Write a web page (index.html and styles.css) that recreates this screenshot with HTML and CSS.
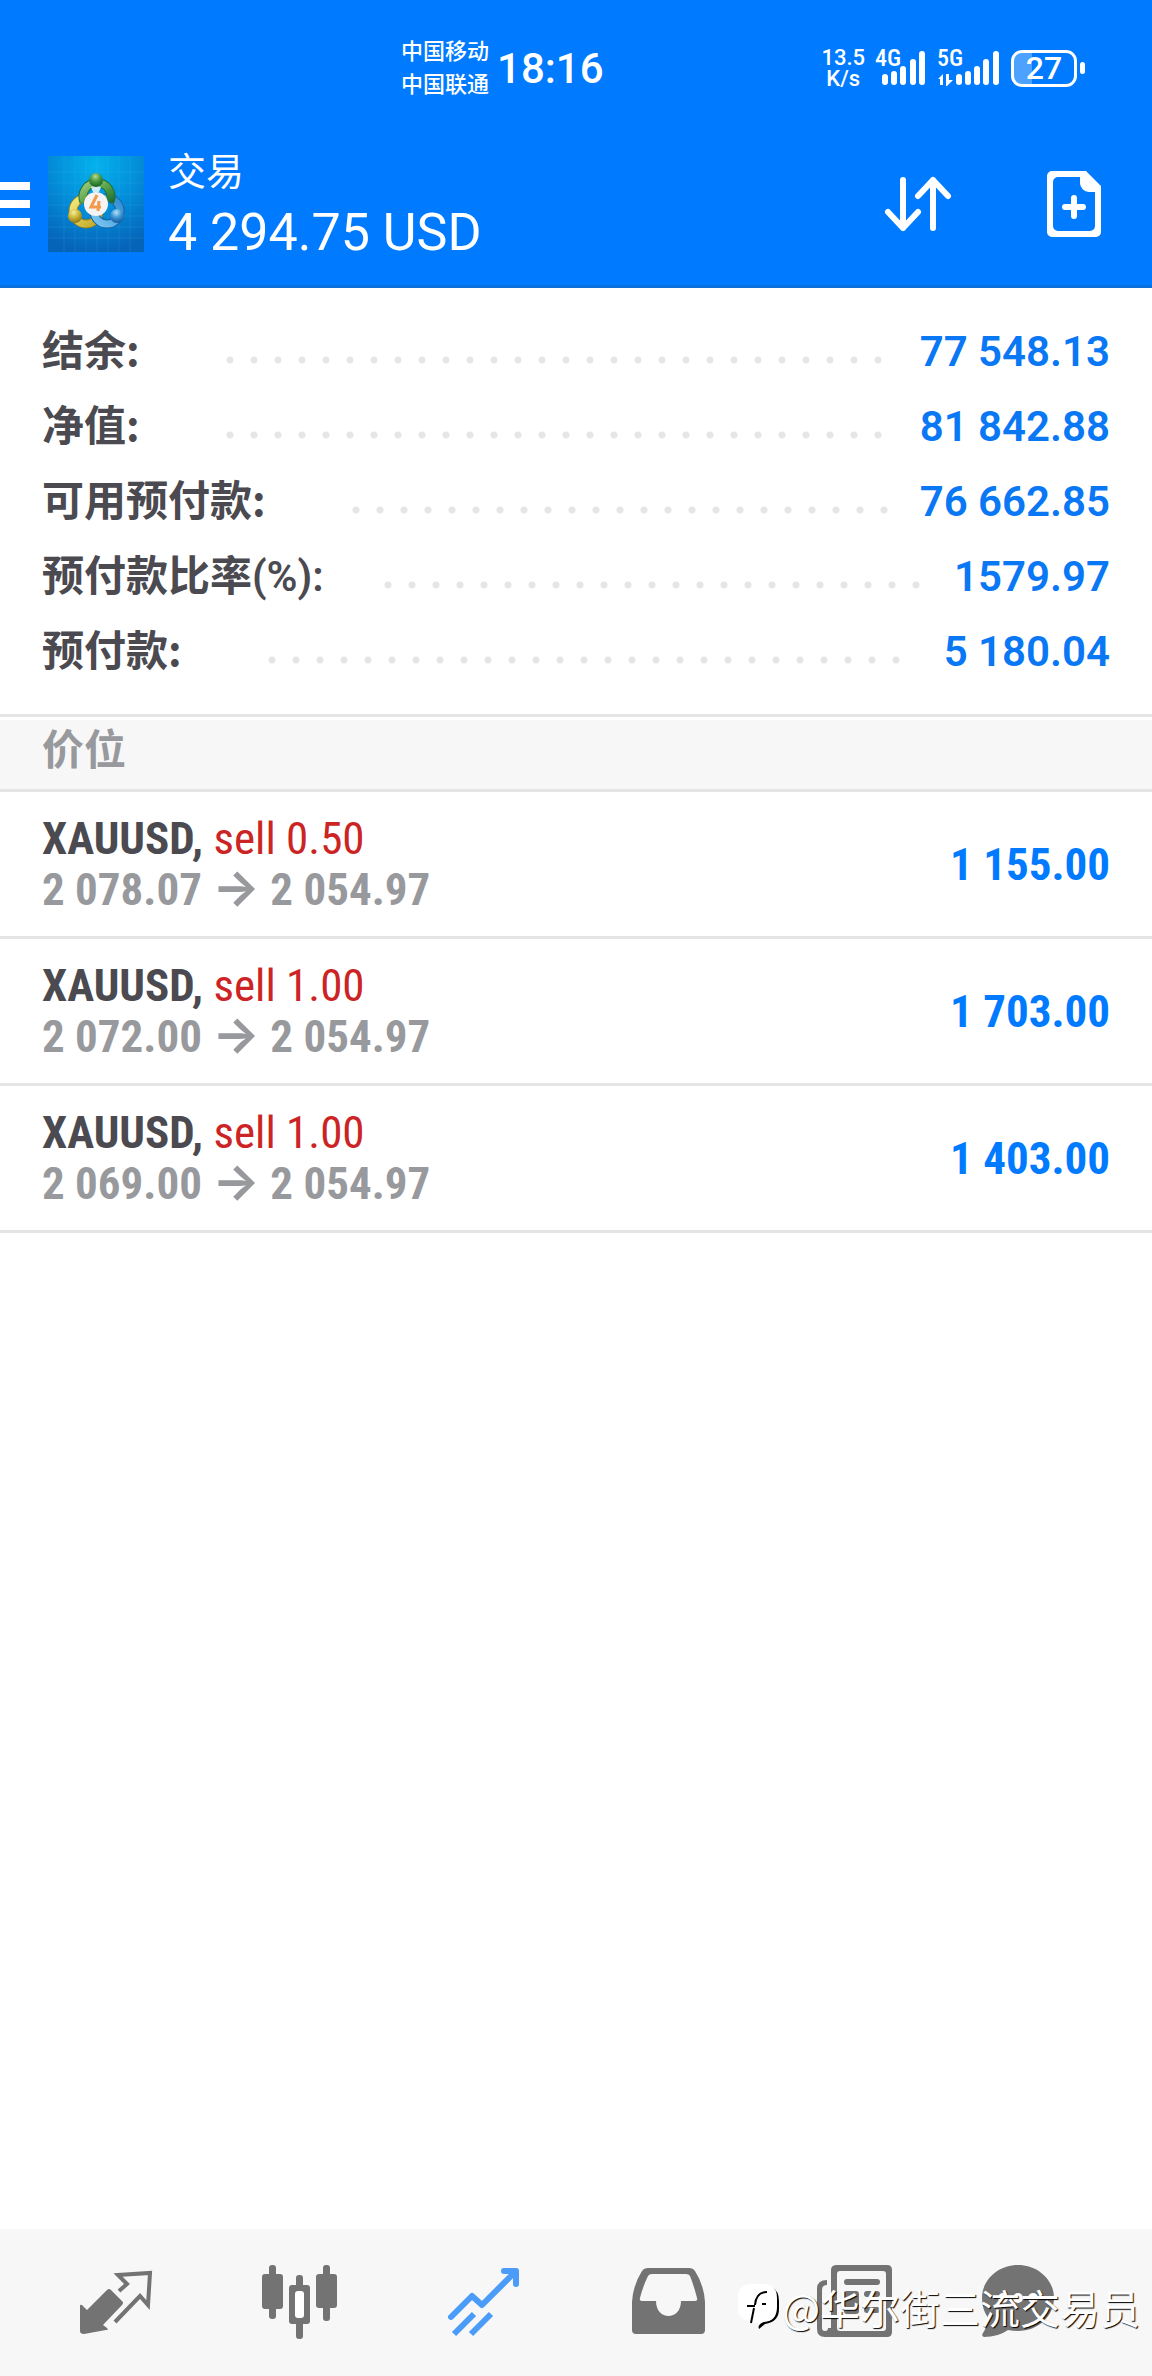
FILE: index.html
```html
<!DOCTYPE html>
<html lang="zh-CN">
<head>
<meta charset="utf-8">
<meta name="viewport" content="width=device-width, initial-scale=1">
<title>交易</title>
<link rel="stylesheet" href="styles.css">
</head>
<body>
<header class="top">
  <div class="status">
    <div class="carriers"><span>中国移动</span><span>中国联通</span></div>
    <time class="clock">18:16</time>
    <div class="status-right">
      <div class="speed"><span>13.5</span><span>K/s</span></div>
      <svg class="signal" width="52" height="52" viewBox="0 -8 52 52" fill="#fff" aria-hidden="true">
        <text x="0" y="16" class="net">4G</text>
        <rect x="7" y="24" width="6" height="11" rx="3"/><rect x="16" y="21" width="6" height="14" rx="3"/><rect x="25" y="16" width="6" height="19" rx="3"/><rect x="35" y="9" width="6" height="26" rx="3"/><rect x="44" y="1" width="6" height="34" rx="3"/>
      </svg>
      <svg class="signal" width="64" height="52" viewBox="0 -8 64 52" fill="#fff" aria-hidden="true">
        <text x="0" y="16" class="net">5G</text>
        <path d="M1 29l5-5v11h-3v-6zM9 24h3v6h4l-6 6h-1z"/>
        <rect x="19" y="24" width="6" height="11" rx="3"/><rect x="28" y="21" width="6" height="14" rx="3"/><rect x="37" y="16" width="6" height="19" rx="3"/><rect x="46" y="9" width="6" height="26" rx="3"/><rect x="56" y="1" width="6" height="34" rx="3"/>
      </svg>
      <div class="battery">27</div>
    </div>
  </div>
  <div class="bar">
    <button class="menu" type="button" aria-label="菜单"><i></i><i></i><i></i></button>
    <svg class="logo" viewBox="0 0 96 96" aria-hidden="true">
      <defs>
        <radialGradient id="sky" cx="50%" cy="10%" r="90%"><stop offset="0" stop-color="#04b2ec"/><stop offset=".5" stop-color="#038dd9"/><stop offset="1" stop-color="#0564b8"/></radialGradient>
        <linearGradient id="green" x1="0" y1="0" x2="1" y2="1"><stop offset="0" stop-color="#9ccb7c"/><stop offset=".6" stop-color="#4e9c43"/><stop offset="1" stop-color="#1f6f35"/></linearGradient>
        <linearGradient id="gold" x1="0" y1="0" x2="1" y2="1"><stop offset="0" stop-color="#f2ea7c"/><stop offset="1" stop-color="#c2a727"/></linearGradient>
        <linearGradient id="blue" x1="0" y1="1" x2="1" y2="0"><stop offset="0" stop-color="#7cc8f2"/><stop offset="1" stop-color="#2f8bd0"/></linearGradient>
        <radialGradient id="greenball" cx="45%" cy="25%" r="70%"><stop offset="0" stop-color="#b5dc9a"/><stop offset=".5" stop-color="#4c9a40"/><stop offset="1" stop-color="#1c6a2e"/></radialGradient>
        <radialGradient id="goldball" cx="40%" cy="25%" r="75%"><stop offset="0" stop-color="#f6ef9a"/><stop offset=".5" stop-color="#cdb738"/><stop offset="1" stop-color="#8c7716"/></radialGradient>
        <radialGradient id="blueball" cx="45%" cy="25%" r="75%"><stop offset="0" stop-color="#b4e0f8"/><stop offset=".5" stop-color="#3c95d3"/><stop offset="1" stop-color="#135a9d"/></radialGradient>
      </defs>
      <rect width="96" height="96" fill="url(#sky)"/>
      <path d="M16 0v96M27 0v96M38 0v96M49 0v96M60 0v96M71 0v96M82 0v96M0 16h96M0 27h96M0 38h96M0 49h96M0 60h96M0 71h96M0 82h96" stroke="#7fd0f5" stroke-opacity=".12"/>
      <g fill="none">
        <circle cx="38" cy="55" r="13" stroke="#8f7d1c" stroke-width="9"/>
        <circle cx="38" cy="55" r="13" stroke="url(#gold)" stroke-width="7"/>
        <circle cx="59" cy="55" r="13" stroke="#175f9e" stroke-width="9"/>
        <circle cx="59" cy="55" r="13" stroke="url(#blue)" stroke-width="7"/>
        <path d="M36 46a14 14 0 1 1 26 0" stroke="#1f6d33" stroke-width="9"/>
        <path d="M36 46a14 14 0 1 1 26 0" stroke="url(#green)" stroke-width="7"/>
      </g>
      <path d="M43 31l5-2 5 2-2 5h-6z" fill="#fff" opacity=".8"/>
      <circle cx="48" cy="24" r="7" fill="url(#greenball)"/>
      <circle cx="27" cy="60" r="7" fill="url(#goldball)"/>
      <circle cx="69" cy="60" r="7" fill="url(#blueball)"/>
      <circle cx="48" cy="48" r="12" fill="#f5f3f3"/>
      <path d="M49 39l-6 12h10M51 45l-1 10" fill="none" stroke="#f19a4c" stroke-width="3"/>
    </svg>
    <div class="heading">
      <h1 class="title">交易</h1>
      <p class="profit">4 294.75 USD</p>
    </div>
    <div class="actions">
      <button type="button" aria-label="排序">
        <svg width="72" height="72" viewBox="0 0 72 72" fill="none" stroke="#fff" stroke-width="6" stroke-linecap="round" stroke-linejoin="round"><path d="M21 12v48M6 44l15 16 15-16M51 60V12M36 28l15-16 15 16"/></svg>
      </button>
      <button type="button" aria-label="新订单">
        <svg width="72" height="72" viewBox="0 0 72 72"><path fill="#fff" fill-rule="evenodd" d="M14 3h34l15 15v46a5 5 0 0 1-5 5H14a5 5 0 0 1-5-5V8a5 5 0 0 1 5-5zM20 9a5 5 0 0 0-5 5v44a5 5 0 0 0 5 5h32a5 5 0 0 0 5-5V24h-6a9 9 0 0 1-9-9V9z"/><path d="M36 30v18M27 39h18" stroke="#fff" stroke-width="6" stroke-linecap="round"/></svg>
      </button>
    </div>
  </div>
</header>

<main class="content">
  <dl class="summary">
    <div class="line"><dt>结余:</dt><dd>77 548.13</dd></div>
    <div class="line"><dt>净值:</dt><dd>81 842.88</dd></div>
    <div class="line"><dt>可用预付款:</dt><dd>76 662.85</dd></div>
    <div class="line line-ratio"><dt>预付款比率<span class="latin">(%):</span></dt><dd>1579.97</dd></div>
    <div class="line"><dt>预付款:</dt><dd>5 180.04</dd></div>
  </dl>
  <h2 class="section">价位</h2>
  <ul class="positions">
    <li class="position">
      <div><p class="deal">XAUUSD, <span class="sell">sell 0.50</span></p><p class="prices">2 078.07 <span class="arrow">→</span> 2 054.97</p></div>
      <span class="gain">1 155.00</span>
    </li>
    <li class="position">
      <div><p class="deal">XAUUSD, <span class="sell">sell 1.00</span></p><p class="prices">2 072.00 <span class="arrow">→</span> 2 054.97</p></div>
      <span class="gain">1 703.00</span>
    </li>
    <li class="position">
      <div><p class="deal">XAUUSD, <span class="sell">sell 1.00</span></p><p class="prices">2 069.00 <span class="arrow">→</span> 2 054.97</p></div>
      <span class="gain">1 403.00</span>
    </li>
  </ul>
</main>

<footer class="footer">
  <nav class="tabs">
    <a href="#quotes" aria-label="行情"><svg viewBox="0 0 144 147"><path fill="currentColor" d="M36 77q0-2 2-1l5 5 20-20q2-2 4 0l11 11q2 2 0 4L59 96l4 3q2 2-1 2l-22 4q-4 0-4-3z"/><path d="M75 62l8-7-9-9 32-2-2 32-8-9-25 26" fill="none" stroke="currentColor" stroke-width="4"/></svg></a>
    <a href="#chart" aria-label="图表"><svg viewBox="0 0 144 147" fill="currentColor"><rect x="34" y="45" width="21" height="35" rx="3"/><rect x="41" y="36" width="7" height="54" rx="3"/><rect x="61" y="56" width="21" height="39" rx="3"/><rect x="68" y="46" width="7" height="64" rx="3"/><rect x="67" y="62" width="9" height="27" rx="3" fill="#fff"/><rect x="88" y="45" width="21" height="34" rx="3"/><rect x="95" y="36" width="7" height="56" rx="3"/></svg></a>
    <a href="#trade" class="active" aria-label="交易" aria-current="page"><svg viewBox="0 0 144 147" fill="none" stroke="currentColor" stroke-width="6"><path stroke-linecap="round" stroke-linejoin="round" d="M39 88l21-21 10 9 33-33M92 42h12v13"/><path d="M42 105l20-20M59 105l20-20"/></svg></a>
    <a href="#history" aria-label="历史"><svg viewBox="0 0 144 147"><path fill="currentColor" fill-rule="evenodd" d="M40 105q-4 0-4-4V73q1-17 10-31 2-3 6-3h41q4 0 6 3 9 14 10 31v28q0 4-4 4zM56 45q-3 0-4 2-5 10-8 22-1 3 2 3h14c0 20 25 20 25 0h14q3 0 2-3-3-12-7-22-1-2-4-2z"/></svg></a>
    <a href="#news" aria-label="新闻"><svg viewBox="0 0 144 147" fill="currentColor"><path fill-rule="evenodd" d="M57 36h50q5 0 5 5v62q0 5-5 5H45q-8 0-8-8V60q0-9 10-9v5q-5 0-5 5v38q0 3 3 3t3-3h3V41q0-5 6-5zM60 42q-3 0-3 3v54q0 3 3 3h43q3 0 3-3V45q0-3-3-3z"/><rect x="64" y="50" width="36" height="6" rx="3"/><rect x="64" y="62" width="15" height="23" rx="3"/><rect x="84" y="62" width="16" height="6" rx="3"/><rect x="84" y="78" width="16" height="6" rx="3"/></svg></a>
    <a href="#chat" aria-label="聊天"><svg viewBox="0 0 144 147"><path fill="currentColor" d="M54 36c20 0 36 15 36 33s-16 33-36 33q-5 0-10-1-10 7-24 7-3-1-1-4 4-6 5-15-6-9-6-20c0-18 16-33 36-33z"/><g fill="#fff"><circle cx="39" cy="69" r="5"/><circle cx="54" cy="69" r="5"/><circle cx="69" cy="69" r="5"/></g></svg></a>
  </nav>
  <div class="watermark">
    <svg width="44" height="46" viewBox="0 0 44 46" aria-hidden="true"><path fill="#000" d="M34 3q7 4 7 14v8q0 13-14 15l-6 5-2-8z"/><path fill="#fff" d="M14 0h11q14 0 14 14v9q0 14-13 15-4 1-6 5l-1-4Q0 38 0 24V14Q0 0 14 0z"/><path d="M13 39l3-15M9 22h8M17 21q1-13 12-13M24 20h4" fill="none" stroke="#000" stroke-width="2"/></svg>
    <span>@华尔街三流交易员</span>
  </div>
</footer>
</body>
</html>
```
FILE: styles.css
```css
* { box-sizing: border-box; }

body {
  margin: 0;
  min-height: 100vh;
  display: flex;
  flex-direction: column;
  background: #fff;
  color: #4b4a50;
  font-family: Roboto, "Noto Sans CJK SC", sans-serif;
}

h1, h2, p, dl, dd, ul { margin: 0; padding: 0; }
ul { list-style: none; }

button {
  padding: 0;
  border: 0;
  background: none;
  color: inherit;
}

svg { display: block; }

/* Header */
.top {
  background: #007aff;
  border-bottom: 3px solid #0a6edb;
  color: #fff;
}

.status {
  display: flex;
  align-items: center;
  height: 123px;
  padding: 13px 67px 0 401px;
}

.carriers {
  display: flex;
  flex-direction: column;
  font-size: 22px;
  font-weight: 500;
  line-height: 33px;
}

.clock {
  margin-left: 8px;
  font-size: 42px;
  font-weight: 500;
}

.status-right {
  display: flex;
  align-items: center;
  margin-left: auto;
}

.speed {
  display: flex;
  flex-direction: column;
  align-items: center;
  margin-right: 10px;
  font-size: 22px;
  font-weight: 500;
  line-height: 21px;
}

.signal { margin-right: 10px; }

.net {
  font-family: "Roboto Condensed", Roboto, sans-serif;
  font-size: 24px;
  font-weight: 500;
}

.battery {
  position: relative;
  width: 66px;
  height: 37px;
  margin-right: 8px;
  border: 3px solid #fff;
  border-radius: 11px;
  background: linear-gradient(90deg, #4da2ff 18px, transparent 18px);
  font-size: 32px;
  font-weight: 500;
  line-height: 31px;
  text-align: center;
}

.battery::after {
  content: "";
  position: absolute;
  top: 9px;
  right: -11px;
  width: 5px;
  height: 12px;
  border-radius: 3px;
  background: #fff;
}

.bar {
  display: flex;
  align-items: center;
  height: 162px;
}

.menu {
  display: flex;
  flex-direction: column;
  gap: 10px;
  width: 30px;
}

.menu i {
  height: 8px;
  background: #fff;
}

.logo {
  width: 96px;
  height: 96px;
  margin: 0 24px 0 18px;
}

.heading { padding-bottom: 2px; }

.title {
  font-size: 38px;
  font-weight: 400;
  line-height: 60px;
}

.profit {
  font-size: 52px;
  line-height: 62px;
}

.actions {
  display: flex;
  gap: 84px;
  margin-left: auto;
  padding-right: 42px;
}

/* Account summary */
.content { flex: 1; }

.summary {
  padding: 26px 42px 25px;
  border-bottom: 3px solid #e4e4e4;
}

.line {
  display: flex;
  align-items: center;
  height: 75px;
  font-size: 42px;
  line-height: 68px;
}

.line::before {
  content: "";
  order: 2;
  flex: 1;
  height: 8px;
  margin: 16px 30px 0 86px;
  background: radial-gradient(circle at 4px 4px, #e5e5e5 3px, transparent 4px) 0 0 / 24px 8px repeat-x;
}

.line-ratio::before { margin-left: 60px; }

.line dt {
  order: 1;
  padding-bottom: 7px;
  font-family: "Noto Sans CJK SC", sans-serif;
  font-weight: 700;
}

.line dd {
  order: 3;
  color: #0a78f5;
  font-weight: 600;
}

.latin {
  font-family: Roboto, sans-serif;
  font-weight: 600;
  line-height: 1px;
}

.section {
  height: 72px;
  margin-top: 3px;
  padding-left: 42px;
  border-bottom: 3px solid #e4e4e4;
  background: #f7f7f7;
  color: #98999d;
  font-family: "Noto Sans CJK SC", sans-serif;
  font-size: 42px;
  font-weight: 700;
  line-height: 54px;
}

/* Open positions */
.position {
  display: flex;
  align-items: center;
  justify-content: space-between;
  padding: 21px 42px;
  border-bottom: 3px solid #e4e4e4;
  font-family: "Roboto Condensed", "Liberation Sans Narrow", Roboto, sans-serif;
  font-size: 45px;
  font-weight: 700;
  line-height: 51px;
}

.sell {
  color: #cc2424;
  font-weight: 400;
}

.prices { color: #98999d; }

.arrow {
  font-family: Inter, sans-serif;
  font-size: 50px;
  line-height: 1px;
}

.gain { color: #007aff; }

/* Bottom navigation */
.footer {
  position: relative;
  background: #f7f7f7;
}

.tabs {
  display: flex;
  padding: 0 24px;
}

.tabs a {
  display: flex;
  flex: 1;
  justify-content: center;
  color: #737373;
}

.tabs .active { color: #4a9cf8; }

.tabs svg {
  width: 144px;
  height: 147px;
}

.watermark {
  position: absolute;
  right: 12px;
  bottom: 40px;
  display: flex;
  align-items: center;
  color: #fff;
  font-family: "Noto Sans CJK SC", sans-serif;
  font-size: 40px;
  line-height: 58px;
  text-shadow: 1px 1px 1px #000;
}
```
